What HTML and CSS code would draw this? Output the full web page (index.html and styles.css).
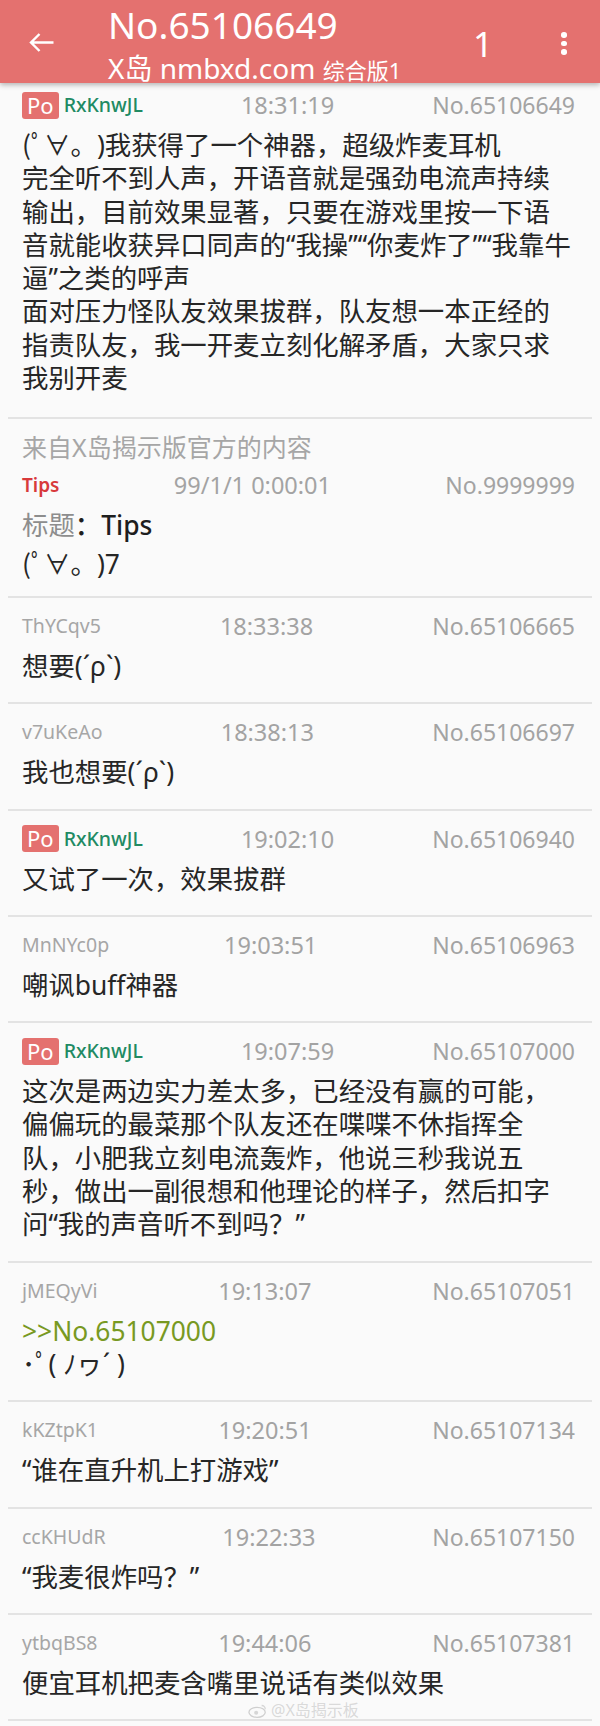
FILE: index.html
```html
<!DOCTYPE html>
<html lang="zh-CN">
<head>
<meta charset="utf-8">
<title>No.65106649</title>
<link rel="stylesheet" href="styles.css">
</head>
<body>
<div class="app">
  <header class="bar">
    <div class="back">
      <svg width="25" height="19" viewBox="0 0 25 19"><path d="M24.5 9.5H2M10.5 1L2 9.5l8.5 8.5" stroke="#fff" stroke-width="2.4" fill="none"/></svg>
    </div>
    <div class="titles">
      <div class="title">No.65106649</div>
      <div class="sub">X岛 nmbxd.com <span class="board">综合版1</span></div>
    </div>
    <div class="count">1</div>
    <div class="menu"><span></span><span></span><span></span></div>
  </header>

  <main class="list">
    <article class="post first">
      <div class="meta"><div class="name"><span class="po">Po</span><span class="uid op">RxKnwJL</span></div><span class="time">18:31:19</span><span class="no">No.65106649</span></div>
      <div class="body">(ﾟ∀。)我获得了一个神器，超级炸麦耳机<br>完全听不到人声，开语音就是强劲电流声持续输出，目前效果显著，只要在游戏里按一下语音就能收获异口同声的“我操”“你麦炸了”“我靠牛逼”之类的呼声<br>面对压力怪队友效果拔群，队友想一本正经的指责队友，我一开麦立刻化解矛盾，大家只求我别开麦</div>
    </article>

    <section class="post notice">
      <div class="from">来自X岛揭示版官方的内容</div>
      <div class="meta"><span class="uid tips">Tips</span><span class="time">99/1/1 0:00:01</span><span class="no">No.9999999</span></div>
      <div class="ntitle"><span class="lbl">标题</span><span class="tt">：Tips</span></div>
      <div class="body">(ﾟ∀。)7</div>
    </section>

    <article class="post">
      <div class="meta"><span class="uid">ThYCqv5</span><span class="time">18:33:38</span><span class="no">No.65106665</span></div>
      <div class="body">想要(´ρ`)</div>
    </article>

    <article class="post">
      <div class="meta"><span class="uid">v7uKeAo</span><span class="time">18:38:13</span><span class="no">No.65106697</span></div>
      <div class="body">我也想要(´ρ`)</div>
    </article>

    <article class="post">
      <div class="meta"><div class="name"><span class="po">Po</span><span class="uid op">RxKnwJL</span></div><span class="time">19:02:10</span><span class="no">No.65106940</span></div>
      <div class="body">又试了一次，效果拔群</div>
    </article>

    <article class="post">
      <div class="meta"><span class="uid">MnNYc0p</span><span class="time">19:03:51</span><span class="no">No.65106963</span></div>
      <div class="body">嘲讽buff神器</div>
    </article>

    <article class="post">
      <div class="meta"><div class="name"><span class="po">Po</span><span class="uid op">RxKnwJL</span></div><span class="time">19:07:59</span><span class="no">No.65107000</span></div>
      <div class="body">这次是两边实力差太多，已经没有赢的可能，偏偏玩的最菜那个队友还在喋喋不休指挥全队，小肥我立刻电流轰炸，他说三秒我说五秒，做出一副很想和他理论的样子，然后扣字问“我的声音听不到吗？”</div>
    </article>

    <article class="post">
      <div class="meta"><span class="uid">jMEQyVi</span><span class="time">19:13:07</span><span class="no">No.65107051</span></div>
      <div class="body"><span class="quote">&gt;&gt;No.65107000</span><br>･ﾟ( ﾉヮ´ )</div>
    </article>

    <article class="post">
      <div class="meta"><span class="uid">kKZtpK1</span><span class="time">19:20:51</span><span class="no">No.65107134</span></div>
      <div class="body">“谁在直升机上打游戏”</div>
    </article>

    <article class="post">
      <div class="meta"><span class="uid">ccKHUdR</span><span class="time">19:22:33</span><span class="no">No.65107150</span></div>
      <div class="body">“我麦很炸吗？”</div>
    </article>

    <article class="post last">
      <div class="meta"><span class="uid">ytbqBS8</span><span class="time">19:44:06</span><span class="no">No.65107381</span></div>
      <div class="body">便宜耳机把麦含嘴里说话有类似效果</div>
    </article>
  </main>

  <div class="watermark">
    <svg width="20" height="15" viewBox="0 0 22 16"><ellipse cx="10" cy="10" rx="9" ry="5.5" fill="none" stroke="#cfcfcf" stroke-width="1.4"/><circle cx="9" cy="10.5" r="2.2" fill="#d6d6d6"/><path d="M15 2.5a4 4 0 0 1 4 4" stroke="#d6d6d6" stroke-width="1.4" fill="none"/></svg>
    <span>@X岛揭示板</span>
  </div>
</div>
</body>
</html>
```

FILE: styles.css
```css
* {
  box-sizing: border-box;
}

html, body {
  margin: 0;
  padding: 0;
  background: #fafafa;
}

body {
  font-family: "Noto Sans", "Noto Sans CJK SC", sans-serif;
  text-autospace: no-autospace;
  text-spacing-trim: space-all;
}

.app {
  position: relative;
  width: 600px;
  min-height: 1726px;
  background: #fafafa;
}

/* ---------- top bar ---------- */
.bar {
  position: relative;
  z-index: 2;
  display: flex;
  height: 83px;
  background: #e4716f;
  color: #fff;
  box-shadow: 0 2px 5px rgba(0, 0, 0, 0.28);
}

.back {
  width: 82px;
  display: flex;
  align-items: center;
  justify-content: center;
  padding-top: 2px;
}

.titles {
  flex: 1;
  padding-left: 26px;
  padding-top: 3px;
  white-space: nowrap;
}

.title {
  font-size: 37px;
  line-height: 44px;
  font-weight: 400;
}

.sub {
  margin-top: 6px;
  font-size: 28px;
  line-height: 30px;
}

.board {
  font-size: 22px;
}

.count {
  width: 40px;
  margin-right: 25px;
  text-align: center;
  font-size: 35px;
  line-height: 87px;
  height: 83px;
}

.menu {
  width: 72px;
  display: flex;
  flex-direction: column;
  align-items: center;
  justify-content: center;
  gap: 3px;
  padding-top: 4px;
}

.menu span {
  width: 5.5px;
  height: 5.5px;
  border-radius: 50%;
  background: #fff;
}

/* ---------- list ---------- */
.list {
  margin: 0 8px;
}

.post {
  border-top: 2px solid #e3e3e3;
  padding: 14px 17px 19px 14px;
}

.post.first {
  border-top: none;
  padding-top: 8px;
  padding-bottom: 22px;
}

.post.last {
  border-bottom: 2px solid #e3e3e3;
}

.meta {
  display: flex;
  align-items: center;
  justify-content: space-between;
  height: 28px;
  white-space: nowrap;
}

.name {
  display: flex;
  align-items: center;
  gap: 5px;
}

.po {
  display: inline-block;
  height: 27px;
  padding: 0 5px;
  border-radius: 3px;
  background: #e4716f;
  color: #fff;
  font-size: 22px;
  line-height: 27px;
}

.uid {
  font-size: 19.5px;
  line-height: 28px;
  color: #a6a6a6;
}

.uid.op {
  color: #218a63;
  font-weight: 500;
}

.uid.tips {
  color: #d8393b;
  font-weight: 600;
  font-size: 19px;
}

.time,
.no {
  font-size: 23px;
  line-height: 28px;
  color: #a3a3a3;
}

.time {
  font-size: 23.5px;
}

.body {
  margin-top: 10px;
  font-size: 26.4px;
  line-height: 33.3px;
  color: #262626;
}

.quote {
  color: #789922;
}

/* ---------- notice ---------- */
.notice {
  padding-bottom: 15px;
}

.from {
  font-size: 25px;
  line-height: 28px;
  color: #a6a6a6;
  white-space: nowrap;
}

.notice .meta {
  margin-top: 10px;
}

.ntitle {
  margin-top: 10px;
  font-size: 26.4px;
  line-height: 33.3px;
}

.lbl {
  color: #8d8d8d;
}

.tt {
  color: #1e1e1e;
  font-weight: 500;
}

.notice .body {
  margin-top: 5px;
}

/* ---------- watermark ---------- */
.watermark {
  position: absolute;
  left: 248px;
  top: 1701px;
  display: flex;
  align-items: center;
  gap: 3px;
  font-size: 16px;
  line-height: 18px;
  color: rgba(165, 165, 165, 0.4);
}
```
